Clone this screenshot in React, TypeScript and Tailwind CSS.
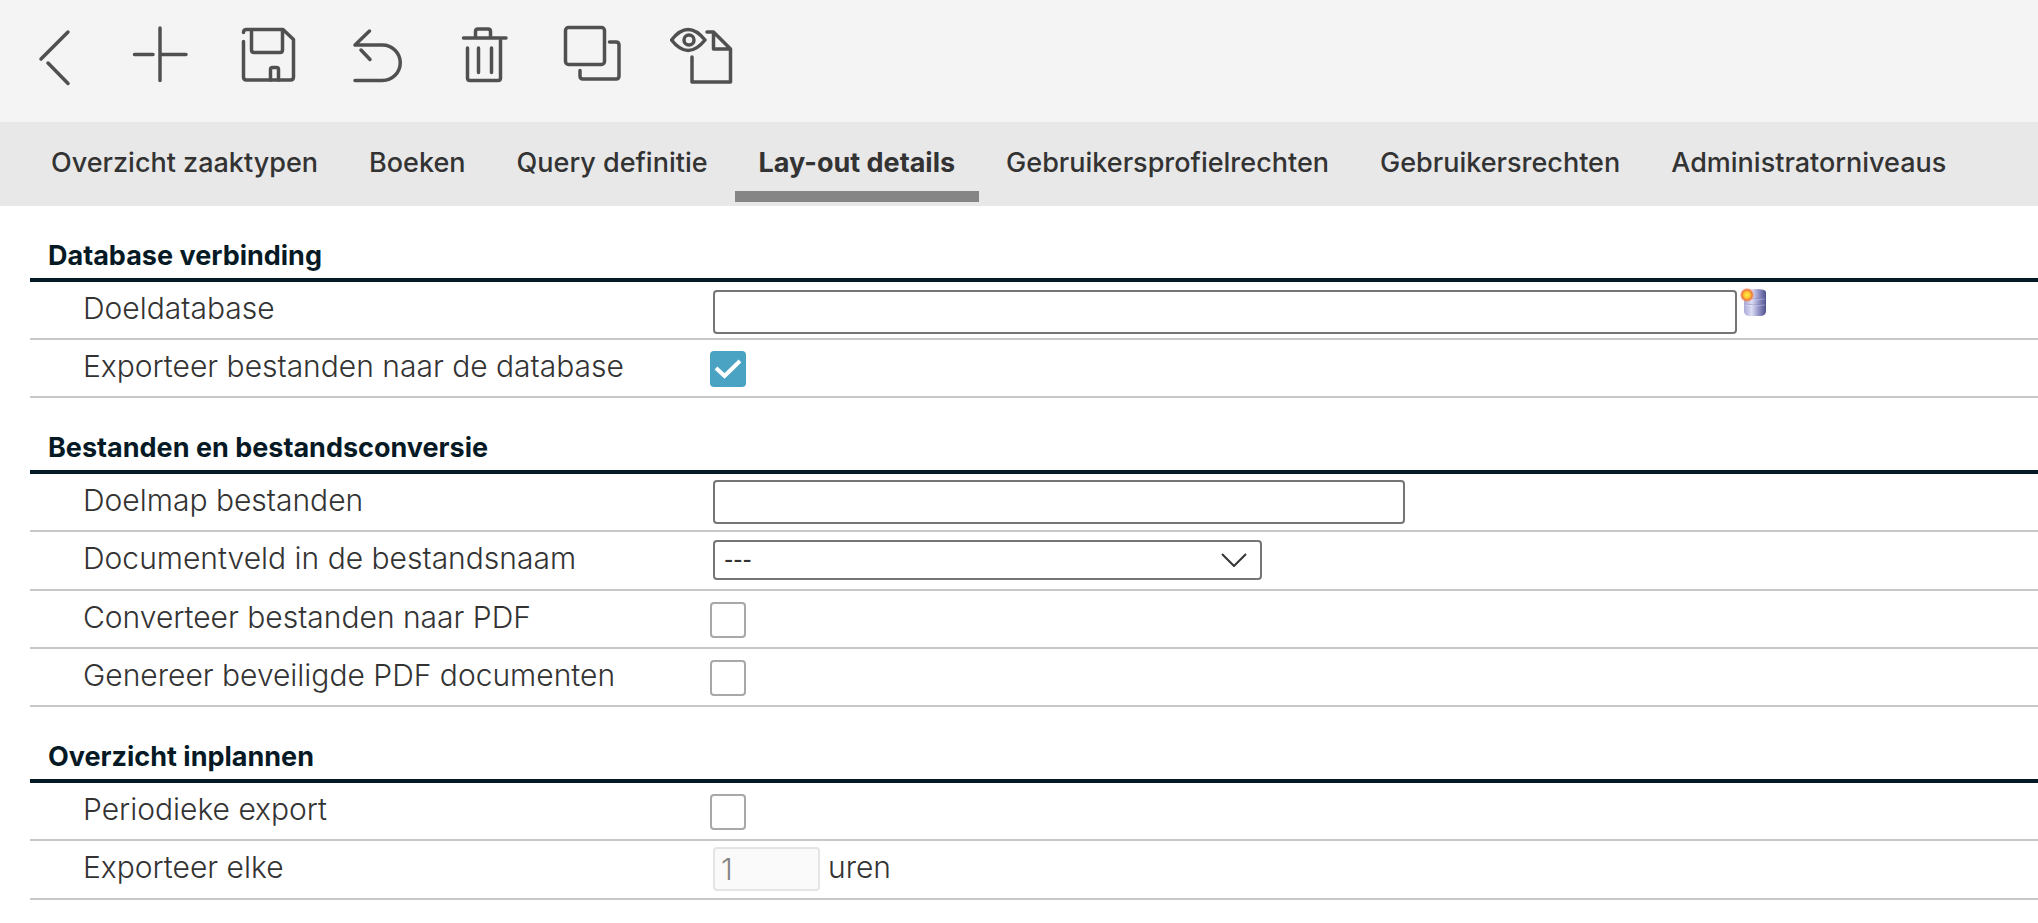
import type { ReactNode } from "react"

const icons: { name: string; shape: ReactNode }[] = [
  { name: "Terug", shape: <path d="M46 10 19 37M26 41l20 20.5" /> },
  { name: "Nieuw", shape: <path d="M30 6v52.5M4.5 32.5H23M30 32.5h26" /> },
  {
    name: "Opslaan",
    shape: (
      <>
        <path d="M5.5 10.5q0-3 3-3H45l10.5 10V55q0 3-3 3h-44q-3 0-3-3V19.5" />
        <path d="M13.5 8v20q0 2.5 2.5 2.5h26q2.5 0 2.5-2.5V8M32.5 58V47.5q0-2 2-2h4q2 0 2 2V58" />
      </>
    ),
  },
  {
    name: "Ongedaan maken",
    shape: <path d="M23.5 9 9 23h27.5a17.75 17.75 0 0 1 0 35.5H9M15 28l9 9.5" />,
  },
  {
    name: "Verwijderen",
    shape: (
      <>
        <path d="M9.5 16H52M21.5 16V9.5q0-2.5 2.5-2.5h10q2.5 0 2.5 2.5V16" />
        <path d="M13.5 26v30q0 2.5 2.5 2.5h28q2.5 0 2.5-2.5V18.5M24.5 26v24.5M37.5 26v24.5" />
      </>
    ),
  },
  {
    name: "Kopiëren",
    shape: (
      <>
        <rect x="3.5" y="5.5" width="39" height="37" rx="3" />
        <path d="M47.5 20H54q3 0 3 3v31q0 3-3 3H21q-3 0-3-3v-5.5" />
      </>
    ),
  },
  {
    name: "Voorbeeld",
    shape: (
      <>
        <path d="M1.500 18Q18-3 35 18 18 39 1.500 18Z" />
        <circle cx="19" cy="18" r="5" />
        <path d="M37 10h6.5l17 17v33H22V35M43.5 10v17h17" />
      </>
    ),
  },
]

const tabs = [
  "Overzicht zaaktypen",
  "Boeken",
  "Query definitie",
  "Lay-out details",
  "Gebruikersprofielrechten",
  "Gebruikersrechten",
  "Administratorniveaus",
]

const inputClass = "h-11 max-w-full rounded border-2 border-[#757575] bg-white px-2 text-[30px] font-light"

function Section({ title, children }: { title: string; children: ReactNode }) {
  return (
    <section>
      <h2 className="border-b-4 border-[#061a25] pt-8 pb-1 pl-[18px] text-[27px] leading-9 font-bold text-[#061a25]">
        {title}
      </h2>
      {children}
    </section>
  )
}

function Row({ id, label, children }: { id: string; label: string; children: ReactNode }) {
  return (
    <div className="flex min-h-[58px] border-b-2 border-[#c8c8c8]">
      <label htmlFor={id} className="w-[680px] shrink-0 pt-2 pl-[53px] text-[30px] leading-9 font-light">
        {label}
      </label>
      {children}
    </div>
  )
}

function CheckRow({ id, label, checked }: { id: string; label: string; checked?: boolean }) {
  return (
    <Row id={id} label={label}>
      <div className="grid pt-[11px]">
        <input
          id={id}
          type="checkbox"
          defaultChecked={checked}
          className="peer col-start-1 row-start-1 size-9 appearance-none rounded border-2 border-[#a8a8a8] bg-white checked:border-[#4aa3c3] checked:bg-[#4aa3c3]"
        />
        <svg
          viewBox="0 0 36 36"
          className="pointer-events-none invisible col-start-1 row-start-1 size-9 fill-none stroke-white stroke-4 peer-checked:visible"
        >
          <path d="m6 17 8.5 8L30 10" />
        </svg>
      </div>
    </Row>
  )
}

function DatabaseIcon() {
  return (
    <svg viewBox="0 0 28 32" className="h-8 w-7">
      <defs>
        <linearGradient id="cylinder">
          <stop offset="0" stopColor="#a9a9d8" />
          <stop offset="0.35" stopColor="#dcdcf4" />
          <stop offset="0.7" stopColor="#8d8dc4" />
          <stop offset="1" stopColor="#50508c" />
        </linearGradient>
        <radialGradient id="spark">
          <stop offset="0" stopColor="#fff04a" />
          <stop offset="0.45" stopColor="#ffc52e" />
          <stop offset="0.75" stopColor="#ee7440" />
          <stop offset="1" stopColor="#f4a27c" stopOpacity="0.3" />
        </radialGradient>
      </defs>
      <path d="M4 6q0-3 11-3t11 3v19q0 5-6 5H10q-6 0-6-5Z" fill="url(#cylinder)" />
      <path d="M5 12q10 2 20 0M5 18q10 2 20 0" fill="none" stroke="#7676b0" strokeOpacity="0.4" />
      <path d="M5 13q10 2 20 0M5 19q10 2 20 0" fill="none" stroke="#fff" strokeOpacity="0.3" />
      <circle cx="7" cy="9" r="7" fill="url(#spark)" />
    </svg>
  )
}

export default function App() {
  return (
    <div className="font-['Inter',sans-serif] text-[#333]">
      <header className="flex bg-[#f4f4f4] pt-[22px] pb-9">
        {icons.map((icon) => (
          <button key={icon.name} type="button" aria-label={icon.name} className="flex w-27 justify-center">
            <svg
              viewBox="0 0 64 64"
              className="size-16 fill-none stroke-[#505050]"
              strokeWidth="3.5"
              strokeLinecap="round"
              strokeLinejoin="round"
            >
              {icon.shape}
            </svg>
          </button>
        ))}
      </header>

      <nav className="flex gap-[3px] bg-[#e8e8e8] pb-1 pl-[27px] text-[27px] leading-9 font-medium whitespace-nowrap">
        {tabs.map((tab) => (
          <a
            key={tab}
            href="#"
            className={
              tab === "Lay-out details"
                ? "border-b-[11px] border-[#858585] px-6 pt-[23px] pb-2.5 font-bold"
                : "border-b-[11px] border-transparent px-6 pt-[23px] pb-2.5"
            }
          >
            {tab}
          </a>
        ))}
      </nav>

      <main className="bg-white pl-[30px]">
        <Section title="Database verbinding">
          <Row id="doeldatabase" label="Doeldatabase">
            <div className="flex items-start gap-[3px] py-1 pl-[3px]">
              <input id="doeldatabase" type="text" className={`${inputClass} mt-1 w-[1024px]`} />
              <button type="button" aria-label="Database kiezen">
                <DatabaseIcon />
              </button>
            </div>
          </Row>
          <CheckRow id="export-bestanden" label="Exporteer bestanden naar de database" checked />
        </Section>

        <Section title="Bestanden en bestandsconversie">
          <Row id="doelmap" label="Doelmap bestanden">
            <div className="py-1.5 pl-[3px]">
              <input id="doelmap" type="text" className={`${inputClass} w-[692px]`} />
            </div>
          </Row>
          <Row id="documentveld" label="Documentveld in de bestandsnaam">
            <div className="grid items-center pt-2 pb-[9px] pl-[3px]">
              <select
                id="documentveld"
                className="col-start-1 row-start-1 h-10 w-[549px] appearance-none rounded border-2 border-[#757575] bg-white pl-[9px] text-xl font-semibold"
              >
                <option>---</option>
              </select>
              <svg
                viewBox="0 0 26 14"
                className="pointer-events-none col-start-1 row-start-1 mr-[15px] h-3.5 w-6.5 justify-self-end fill-none stroke-[#333] stroke-2"
              >
                <path d="m1 1 12 12L25 1" />
              </svg>
            </div>
          </Row>
          <CheckRow id="converteer-pdf" label="Converteer bestanden naar PDF" />
          <CheckRow id="beveiligd-pdf" label="Genereer beveiligde PDF documenten" />
        </Section>

        <Section title="Overzicht inplannen">
          <CheckRow id="periodiek" label="Periodieke export" />
          <Row id="interval" label="Exporteer elke">
            <div className="flex gap-2 pt-1.5 pb-[7px] pl-[3px] text-[30px] font-light">
              <input
                id="interval"
                type="text"
                defaultValue="1"
                disabled
                className="h-11 w-[107px] rounded border-2 border-[#e5e5e5] bg-[#fafafa] px-1.5 text-[#858585]"
              />
              <span className="pt-0.5 leading-9">uren</span>
            </div>
          </Row>
        </Section>
      </main>
    </div>
  )
}
